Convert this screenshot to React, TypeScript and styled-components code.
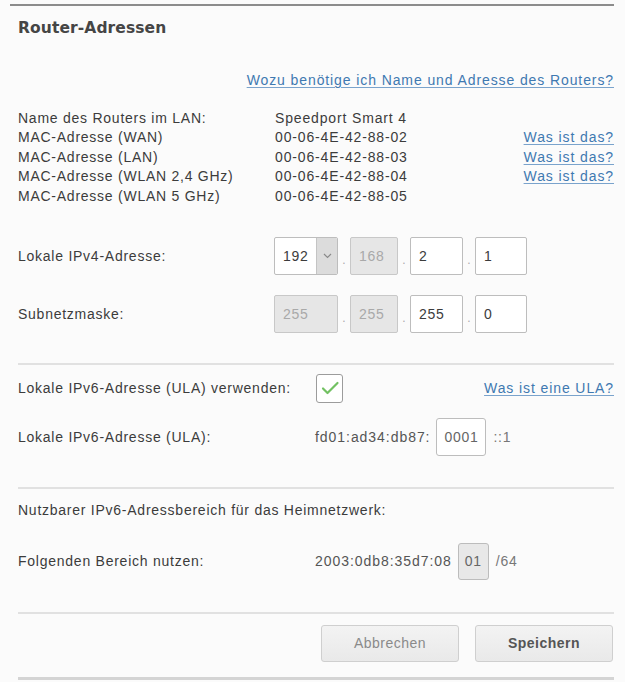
import React from "react";
import styled, { createGlobalStyle } from "styled-components";

const Global = createGlobalStyle`
  html, body { margin: 0; padding: 0; background: #fbfbfb; }
  body { font-family: "Liberation Sans", Arial, sans-serif; color: #3c3c3c; }
  * { box-sizing: border-box; }
`;

const Page = styled.div`
  width: 625px;
  padding: 4px 11px 0 18px;
  background: #fbfbfb;
`;

const TopRule = styled.div`
  height: 2px;
  margin-left: -8px;
  background: #8c8c8c;
`;

const Title = styled.h2`
  margin: 11px 0 0 0;
  font-family: "DejaVu Sans", Verdana, sans-serif;
  font-weight: 700;
  font-size: 15.5px;
  line-height: 22px;
  color: #454545;
  letter-spacing: 0.1px;
`;

const Link = styled.a`
  color: #3f79b1;
  text-decoration: underline;
  text-underline-offset: 2px;
  text-decoration-color: #7aa3cc;
  font-size: 14px;
  letter-spacing: 0.9px;
  white-space: nowrap;
  cursor: pointer;
`;

const HelpRow = styled.div`
  margin-top: 31px;
  display: flex;
  justify-content: flex-end;
  line-height: 20px;
`;

const InfoList = styled.div`
  margin-top: 18px;
  display: flex;
  flex-direction: column;
`;

const Row = styled.div<{ $label: number; $h: number; $mt?: number }>`
  display: grid;
  grid-template-columns: ${(p) => p.$label}px 1fr auto;
  align-items: center;
  height: ${(p) => p.$h}px;
  margin-top: ${(p) => p.$mt ?? 0}px;
`;

const Label = styled.span`
  font-size: 14px;
  letter-spacing: 0.75px;
  color: #3c3c3c;
  white-space: nowrap;
`;

const Value = styled.span`
  font-size: 14px;
  letter-spacing: 0.85px;
  color: #3c3c3c;
  white-space: nowrap;
`;

const Inline = styled.div`
  display: flex;
  align-items: center;
`;

const Octets = styled.div`
  display: flex;
  align-items: stretch;
  height: 38px;
`;

const Box = styled.div<{ $w: number; $disabled?: boolean }>`
  width: ${(p) => p.$w}px;
  height: 100%;
  display: flex;
  align-items: center;
  padding-left: 8px;
  border: 1px solid ${(p) => (p.$disabled ? "#c8c8c8" : "#bdbdbd")};
  border-radius: 2px;
  background: ${(p) => (p.$disabled ? "#e6e6e6" : "#ffffff")};
  color: ${(p) => (p.$disabled ? "#a9a9a9" : "#3c3c3c")};
  font-size: 14px;
  letter-spacing: 0.7px;
  overflow: hidden;
`;

const SelectBox = styled(Box)`
  padding-left: 0;
`;

const SelectValue = styled.span`
  flex: 1;
  padding-left: 8px;
`;

const SelectArrow = styled.span`
  width: 21px;
  align-self: stretch;
  background: #dcdcdc;
  border-left: 1px solid #c4c4c4;
  display: flex;
  align-items: center;
  justify-content: center;
`;

const Dot = styled.span`
  width: 12px;
  display: flex;
  align-items: flex-end;
  justify-content: center;
  padding-bottom: 9px;
  color: #aaa;
  font-size: 12px;
  line-height: 1;
`;

const Check = styled.div`
  width: 27px;
  height: 29px;
  border: 1px solid #9c9c9c;
  border-radius: 3px;
  background: #fff;
  display: flex;
  align-items: center;
  justify-content: center;
`;

const Separator = styled.div<{ $mt: number }>`
  height: 2px;
  margin-top: ${(p) => p.$mt}px;
  background: #e1e1e1;
`;

const SmallBox = styled.div<{ $w: number; $h: number; $grey?: boolean }>`
  width: ${(p) => p.$w}px;
  height: ${(p) => p.$h}px;
  display: flex;
  align-items: center;
  justify-content: center;
  border: 1px solid ${(p) => (p.$grey ? "#bcbcbc" : "#bdbdbd")};
  border-radius: 3px;
  background: ${(p) => (p.$grey ? "#e8e8e8" : "#fff")};
  color: #666;
  font-size: 14px;
  letter-spacing: 0.7px;
`;

const Suffix = styled.span`
  font-size: 14px;
  letter-spacing: 0.7px;
  color: #777;
  margin-left: 7px;
`;

const Prefix = styled.span`
  font-size: 14px;
  letter-spacing: 0.95px;
  color: #555;
  margin-right: 6px;
`;

const Actions = styled.div`
  margin-top: 11px;
  display: flex;
  justify-content: flex-end;
  gap: 16px;
  padding-right: 1px;
`;

const Button = styled.button<{ $primary?: boolean }>`
  width: 138px;
  height: 37px;
  border: 1px solid #cfcfcf;
  border-radius: 3px;
  background: linear-gradient(#f3f3f3, #e9e9e9);
  font-family: "Liberation Sans", Arial, sans-serif;
  font-size: 14px;
  letter-spacing: 0.5px;
  font-weight: ${(p) => (p.$primary ? 700 : 400)};
  color: ${(p) => (p.$primary ? "#555" : "#8a8a8a")};
  cursor: pointer;
`;

const BottomRule = styled.div`
  height: 3px;
  margin-top: 15px;
  background: #d4d4d4;
`;

const Chevron = () => (
  <svg width="9" height="6" viewBox="0 0 9 6">
    <path d="M1 1 L4.5 4.5 L8 1" fill="none" stroke="#8a8a8a" strokeWidth="1.2" />
  </svg>
);

const CheckMark = () => (
  <svg width="20" height="16" viewBox="0 0 20 16">
    <path d="M3 8.5 L7.5 13 L17.5 3" fill="none" stroke="#72c162" strokeWidth="2.2" strokeLinecap="round" strokeLinejoin="round" />
  </svg>
);

const info = [
  { l: "Name des Routers im LAN:", v: "Speedport Smart 4", link: false },
  { l: "MAC-Adresse (WAN)", v: "00-06-4E-42-88-02", link: true },
  { l: "MAC-Adresse (LAN)", v: "00-06-4E-42-88-03", link: true },
  { l: "MAC-Adresse (WLAN 2,4 GHz)", v: "00-06-4E-42-88-04", link: true },
  { l: "MAC-Adresse (WLAN 5 GHz)", v: "00-06-4E-42-88-05", link: false },
];

const widths = [64, 48, 53, 52];

export default function App() {
  return (
    <>
      <Global />
      <Page>
        <TopRule />
        <Title>Router-Adressen</Title>
        <HelpRow>
          <Link>Wozu benötige ich Name und Adresse des Routers?</Link>
        </HelpRow>
        <InfoList>
          {info.map((r) => (
            <Row key={r.l} $label={257} $h={19.5}>
              <Label>{r.l}</Label>
              <Value>{r.v}</Value>
              {r.link ? <Link>Was ist das?</Link> : <span />}
            </Row>
          ))}
        </InfoList>

        <Row $label={256} $h={38} $mt={31}>
          <Label>Lokale IPv4-Adresse:</Label>
          <Octets>
            <SelectBox $w={widths[0]}>
              <SelectValue>192</SelectValue>
              <SelectArrow>
                <Chevron />
              </SelectArrow>
            </SelectBox>
            <Dot>.</Dot>
            <Box $w={widths[1]} $disabled>168</Box>
            <Dot>.</Dot>
            <Box $w={widths[2]}>2</Box>
            <Dot>.</Dot>
            <Box $w={widths[3]}>1</Box>
          </Octets>
          <span />
        </Row>

        <Row $label={256} $h={38} $mt={20}>
          <Label>Subnetzmaske:</Label>
          <Octets>
            <Box $w={widths[0]} $disabled>255</Box>
            <Dot>.</Dot>
            <Box $w={widths[1]} $disabled>255</Box>
            <Dot>.</Dot>
            <Box $w={widths[2]}>255</Box>
            <Dot>.</Dot>
            <Box $w={widths[3]}>0</Box>
          </Octets>
          <span />
        </Row>

        <Separator $mt={30} />

        <Row $label={298} $h={29} $mt={9}>
          <Label>Lokale IPv6-Adresse (ULA) verwenden:</Label>
          <Inline>
            <Check>
              <CheckMark />
            </Check>
          </Inline>
          <Link>Was ist eine ULA?</Link>
        </Row>

        <Row $label={297} $h={38} $mt={15}>
          <Label>Lokale IPv6-Adresse (ULA):</Label>
          <Inline>
            <Prefix>fd01:ad34:db87:</Prefix>
            <SmallBox $w={50} $h={38}>0001</SmallBox>
            <Suffix>::1</Suffix>
          </Inline>
          <span />
        </Row>

        <Separator $mt={31} />

        <Row $label={600} $h={20} $mt={11}>
          <Label>Nutzbarer IPv6-Adressbereich für das Heimnetzwerk:</Label>
        </Row>

        <Row $label={297} $h={37} $mt={23}>
          <Label>Folgenden Bereich nutzen:</Label>
          <Inline>
            <Prefix>2003:0db8:35d7:08</Prefix>
            <SmallBox $w={31} $h={37} $grey>01</SmallBox>
            <Suffix>/64</Suffix>
          </Inline>
          <span />
        </Row>

        <Separator $mt={32} />

        <Actions>
          <Button>Abbrechen</Button>
          <Button $primary>Speichern</Button>
        </Actions>

        <BottomRule />
      </Page>
    </>
  );
}
